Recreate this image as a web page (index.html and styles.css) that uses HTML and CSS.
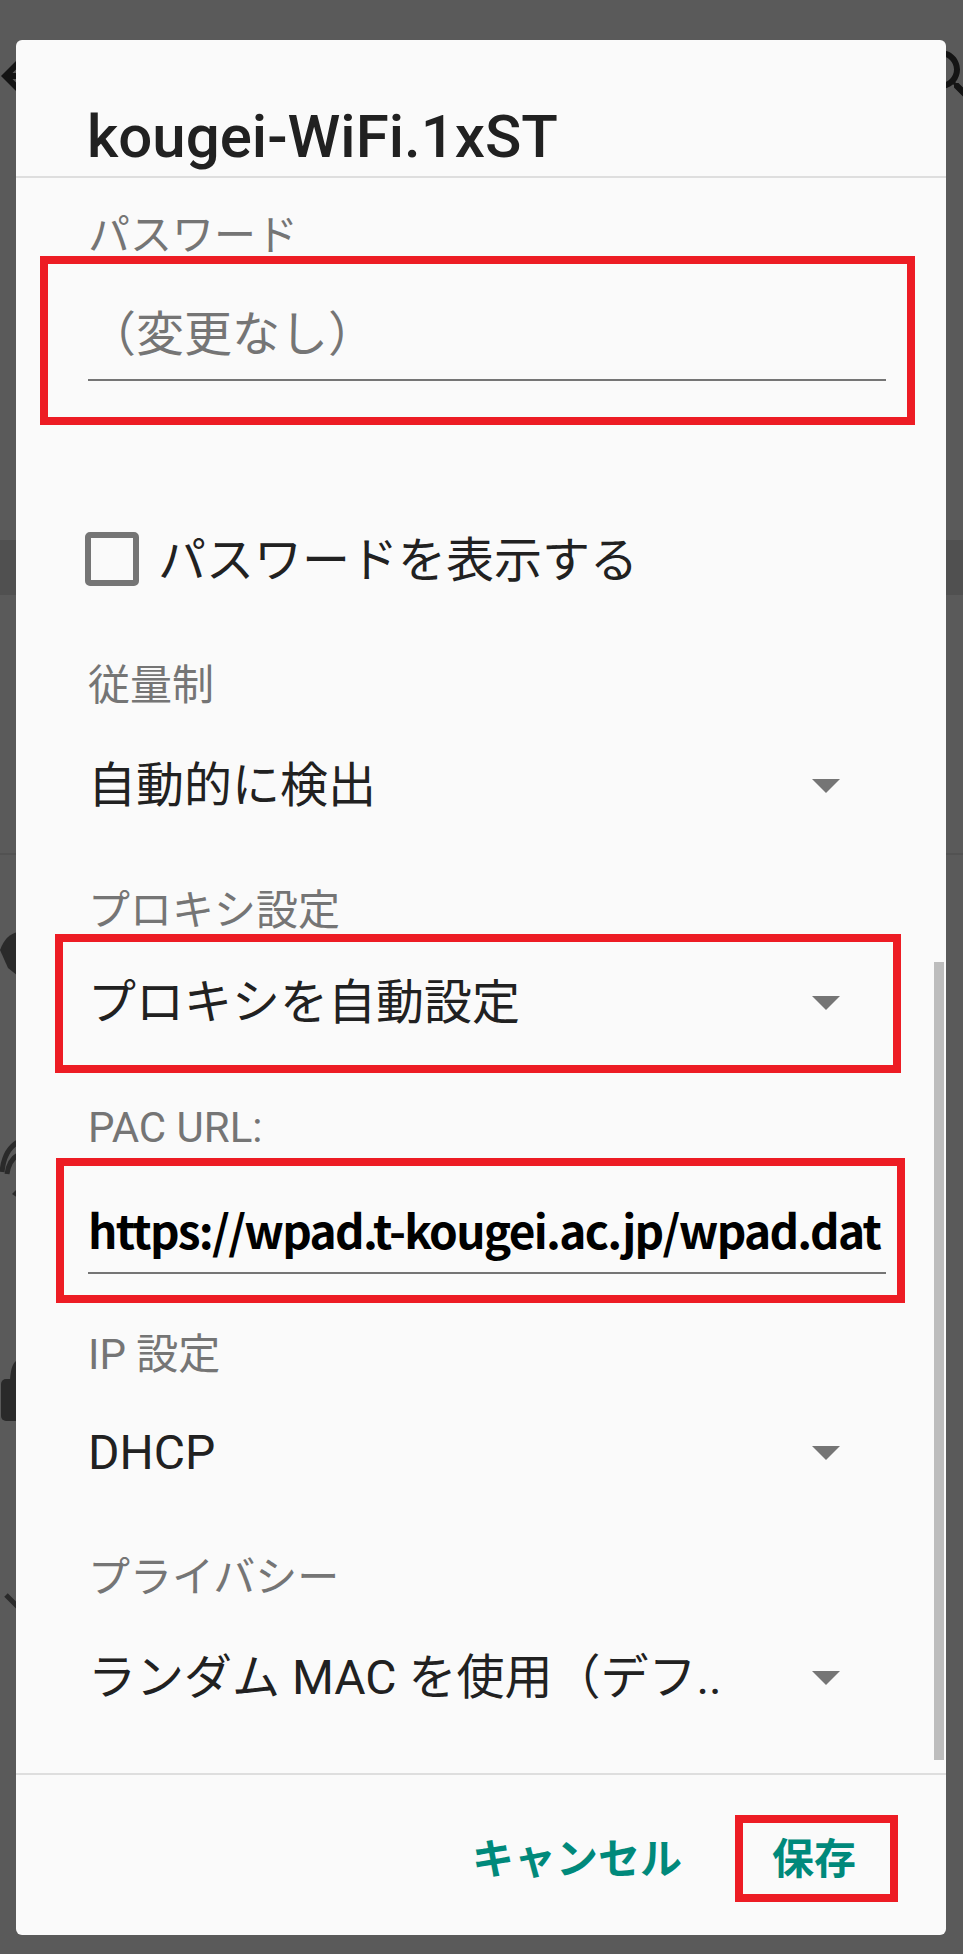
FILE: index.html
```html
<!DOCTYPE html>
<html lang="ja">
<head>
<meta charset="utf-8">
<title>kougei-WiFi.1xST</title>
<link rel="stylesheet" href="styles.css">
</head>
<body>
<div class="backdrop">
  <svg class="backdrop-art" width="963" height="1954" viewBox="0 0 963 1954" aria-hidden="true">
    <rect x="0" y="540" width="963" height="55" fill="#505050"/>
    <rect x="0" y="853" width="963" height="2" fill="#525252"/>
    <g transform="translate(-11 40) scale(3)" fill="#141414">
      <path d="M20 11H7.83l5.59-5.59L12 4l-8 8 8 8 1.41-1.41L7.83 13H20v-2z"/>
    </g>
    <g transform="translate(912 41) scale(3)" fill="#141414">
      <path d="M15.5 14h-.79l-.28-.27C15.41 12.59 16 11.11 16 9.5 16 5.91 13.09 3 9.5 3S3 5.91 3 9.5 5.91 16 9.5 16c1.61 0 3.09-.59 4.23-1.57l.27.28v.79l5 4.99L20.49 19l-4.99-5zm-6 0C7.01 14 5 11.99 5 9.5S7.01 5 9.5 5 14 7.01 14 9.5 11.99 14 9.5 14z"/>
    </g>
    <path d="M0 950 Q6 934 18 932 L18 976 L8 968 Z" fill="#2a2a2a"/>
    <path d="M2 1172 Q4 1150 18 1142" stroke="#2a2a2a" stroke-width="5" fill="none"/>
    <path d="M7 1174 Q9 1160 18 1155" stroke="#2a2a2a" stroke-width="5" fill="none"/>
    <path d="M18 1188 L12 1194 L18 1198 Z" fill="#2a2a2a"/>
    <path d="M10 1380 Q11 1362 18 1360 L18 1380 Z" fill="#2a2a2a"/>
    <rect x="1" y="1379" width="24" height="42" rx="5" fill="#2a2a2a"/>
    <path d="M6 1595 L18 1607" stroke="#2a2a2a" stroke-width="5"/>
  </svg>
</div>

<div class="dialog">
  <div class="dialog-title">kougei-WiFi.1xST</div>

  <div class="dialog-body">
    <div class="field-label">パスワード</div>
    <div class="text-input placeholder">（変更なし）</div>

    <div class="check-row">
      <span class="checkbox"></span>
      <span class="check-text">パスワードを表示する</span>
    </div>

    <div class="field-label gap-lg">従量制</div>
    <div class="spinner"><span class="spinner-text">自動的に検出</span><span class="arrow"></span></div>

    <div class="field-label gap-lg">プロキシ設定</div>
    <div class="spinner gap-sm"><span class="spinner-text">プロキシを自動設定</span><span class="arrow"></span></div>

    <div class="field-label gap-lg latin">PAC URL:</div>
    <div class="text-input url">https://wpad.t-kougei.ac.jp/wpad.dat</div>

    <div class="field-label gap-ip">IP 設定</div>
    <div class="spinner gap-dhcp"><span class="spinner-text">DHCP</span><span class="arrow"></span></div>

    <div class="field-label gap-lg">プライバシー</div>
    <div class="spinner"><span class="spinner-text">ランダム MAC を使用（デフ..</span><span class="arrow"></span></div>

    <div class="scrollbar"></div>

    <div class="mark mark-password"></div>
    <div class="mark mark-proxy"></div>
    <div class="mark mark-pac"></div>
  </div>

  <div class="dialog-actions">
    <span class="btn">キャンセル</span>
    <span class="btn">保存</span>
    <div class="mark mark-save"></div>
  </div>
</div>
</body>
</html>
```

FILE: styles.css
```css
html, body {
  margin: 0;
  padding: 0;
}

body {
  width: 963px;
  height: 1954px;
  background: #5a5a5a;
  position: relative;
  overflow: hidden;
  font-family: Roboto, "Noto Sans CJK JP", sans-serif;
}

.backdrop {
  width: 963px;
  height: 1954px;
}

.backdrop-art {
  display: block;
}

.dialog {
  position: absolute;
  left: 16px;
  top: 40px;
  width: 930px;
  height: 1895px;
  background: #fafafa;
  border-radius: 6px;
  display: flex;
  flex-direction: column;
  box-sizing: border-box;
}

.dialog-title {
  padding: 62px 0 4px 71px;
  line-height: 70px;
  height: 70px;
  font-size: 60px;
  font-weight: 500;
  color: #212121;
  border-bottom: 2px solid #dedede;
}

.dialog-body {
  flex: 1;
  position: relative;
  padding: 0 60px 0 72px;
  overflow: hidden;
}

.field-label {
  margin-top: 28px;
  height: 60px;
  line-height: 60px;
  font-size: 42px;
  color: #757575;
}

.field-label.gap-lg {
  margin-top: 65px;
}

.field-label.gap-ip {
  margin-top: 51px;
}

.text-input {
  margin-top: 39px;
  height: 60px;
  line-height: 60px;
  padding-bottom: 14px;
  border-bottom: 2px solid #757575;
  font-size: 48px;
  white-space: nowrap;
}

.text-input.placeholder {
  color: #757575;
}

.text-input.url {
  margin-top: 41px;
  padding-bottom: 13px;
  font-family: "Noto Sans CJK JP", sans-serif;
  font-weight: 700;
  font-size: 46px;
  letter-spacing: -1.7px;
  color: #000;
}

.check-row {
  margin-top: 150px;
  height: 60px;
  display: flex;
  align-items: center;
  margin-left: -3px;
}

.checkbox {
  width: 54px;
  height: 54px;
  box-sizing: border-box;
  border: 6px solid #757575;
  border-radius: 5px;
  margin-bottom: 4px;
}

.check-text {
  margin-left: 19px;
  font-size: 48px;
  line-height: 60px;
  color: #212121;
}

.spinner {
  margin-top: 40px;
  height: 60px;
  display: flex;
  align-items: center;
  justify-content: space-between;
}

.spinner.gap-sm {
  margin-top: 32px;
}

.spinner.gap-dhcp {
  margin-top: 38px;
}

.spinner-text {
  font-size: 48px;
  line-height: 60px;
  color: #212121;
  white-space: nowrap;
}

.arrow {
  width: 0;
  height: 0;
  border-left: 14px solid transparent;
  border-right: 14px solid transparent;
  border-top: 14px solid #757575;
  margin-right: 46px;
}

.scrollbar {
  position: absolute;
  right: 2px;
  top: 784px;
  width: 10px;
  height: 798px;
  background: #bdbdbd;
}

.dialog-actions {
  position: relative;
  height: 162px;
  border-top: 2px solid #dedede;
  display: flex;
  justify-content: flex-end;
  align-items: flex-start;
  padding: 55px 66px 0 0;
  box-sizing: border-box;
  gap: 42px;
}

.btn {
  font-size: 42px;
  line-height: 60px;
  font-weight: 700;
  color: #00897b;
  padding: 0 24px;
}

.mark {
  position: absolute;
  border: 8px solid #ed1c24;
  box-sizing: border-box;
}

.mark-password {
  left: 24px;
  top: 78px;
  width: 875px;
  height: 169px;
}

.mark-proxy {
  left: 39px;
  top: 756px;
  width: 846px;
  height: 139px;
}

.mark-pac {
  left: 40px;
  top: 980px;
  width: 849px;
  height: 145px;
}

.mark-save {
  left: 719px;
  top: 40px;
  width: 163px;
  height: 87px;
}
```
